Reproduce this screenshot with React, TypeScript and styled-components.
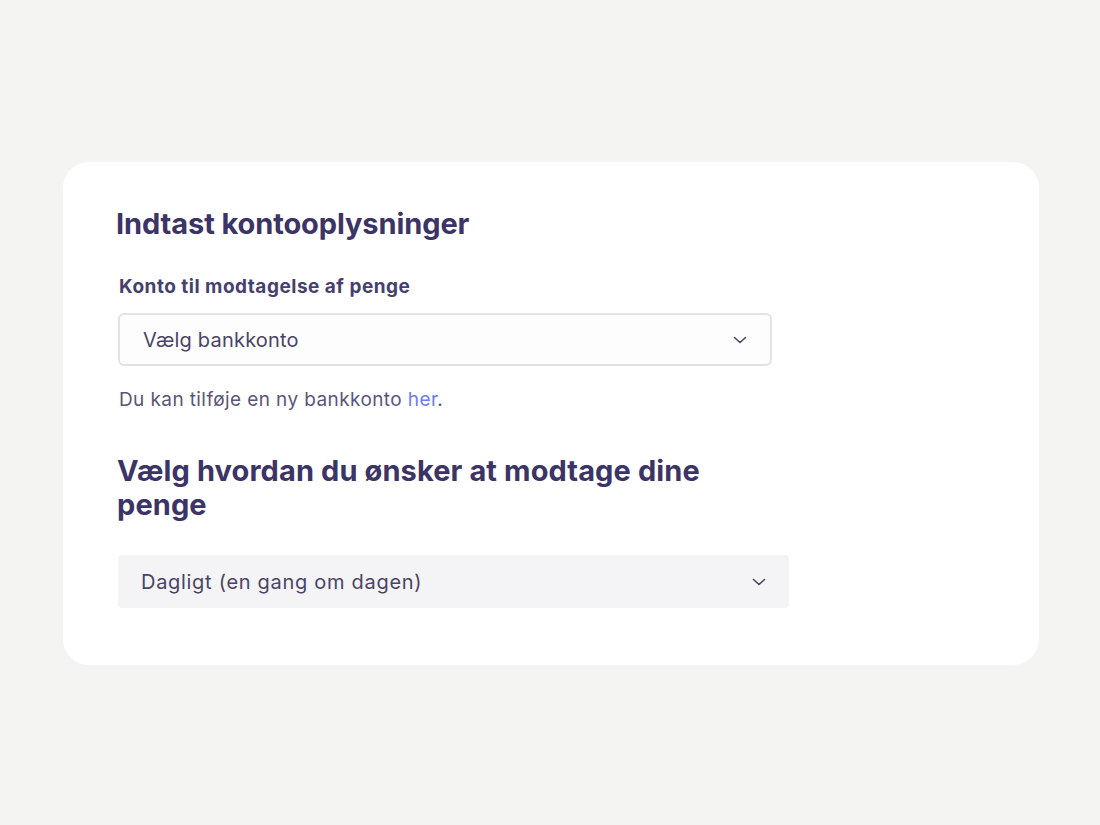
import * as React from 'react';
import styled, { createGlobalStyle } from 'styled-components';

const GlobalStyle = createGlobalStyle`
  html, body {
    margin: 0;
    padding: 0;
    background: #f4f4f2;
  }
  body {
    font-family: Inter, "Noto Sans", sans-serif;
    -webkit-font-smoothing: antialiased;
  }
`;

const Page = styled.div`
  width: 1100px;
  height: 825px;
  box-sizing: border-box;
  padding: 162px 61px 0 63px;
`;

const Card = styled.div`
  background: #ffffff;
  border-radius: 26px;
  height: 503px;
  box-sizing: border-box;
  padding: 44px 53px 0 53px;
`;

const Content = styled.div`
  width: 672px;
  display: flex;
  flex-direction: column;
`;

const Title = styled.h1`
  margin: 0;
  font-size: 29px;
  line-height: 36px;
  font-weight: 700;
  letter-spacing: -0.1px;
  color: #3c3366;
`;

const Label = styled.label`
  margin: 33px 0 0 3px;
  font-size: 19px;
  line-height: 24px;
  font-weight: 700;
  letter-spacing: 0.5px;
  color: #473f6e;
`;

const SelectBox = styled.div<{ $filled?: boolean }>`
  margin-top: ${(p) => (p.$filled ? '33px' : '14px')};
  margin-left: 2px;
  width: ${(p) => (p.$filled ? '671px' : '654px')};
  height: 53px;
  box-sizing: border-box;
  border-radius: ${(p) => (p.$filled ? '4px' : '6px')};
  border: ${(p) => (p.$filled ? 'none' : '2px solid #e3e2e6')};
  background: ${(p) => (p.$filled ? '#f4f4f6' : '#fdfdfd')};
  display: flex;
  align-items: center;
  justify-content: space-between;
  padding: 0 22px 0 23px;
  font-size: 20px;
  color: #4a4368;
  letter-spacing: ${(p) => (p.$filled ? '0.7px' : '0.2px')};
`;

const Chevron = styled.svg`
  width: 16px;
  height: 16px;
  flex-shrink: 0;
`;

const Helper = styled.p`
  margin: 22px 0 0 3px;
  font-size: 19px;
  line-height: 24px;
  color: #5b5578;
  letter-spacing: 0.4px;
`;

const Link = styled.a`
  color: #6e7cf0;
  text-decoration: none;
`;

const SubTitle = styled.h2`
  margin: 42px 0 0 1px;
  font-size: 29px;
  line-height: 34px;
  font-weight: 700;
  letter-spacing: 0.1px;
  color: #3c3366;
  width: 620px;
`;

const ChevronIcon = () => (
  <Chevron viewBox="0 0 16 16" fill="none">
    <path d="M2.5 5.5l5.5 5 5.5-5" stroke="#4a4466" strokeWidth="1.6" strokeLinecap="round" strokeLinejoin="round" />
  </Chevron>
);

export default function App() {
  return (
    <>
      <GlobalStyle />
      <Page>
        <Card>
          <Content>
            <Title>Indtast kontooplysninger</Title>
            <Label>Konto til modtagelse af penge</Label>
            <SelectBox>
              <span>Vælg bankkonto</span>
              <ChevronIcon />
            </SelectBox>
            <Helper>
              Du kan tilføje en ny bankkonto <Link href="#">her</Link>.
            </Helper>
            <SubTitle>Vælg hvordan du ønsker at modtage dine penge</SubTitle>
            <SelectBox $filled>
              <span>Dagligt (en gang om dagen)</span>
              <ChevronIcon />
            </SelectBox>
          </Content>
        </Card>
      </Page>
    </>
  );
}
